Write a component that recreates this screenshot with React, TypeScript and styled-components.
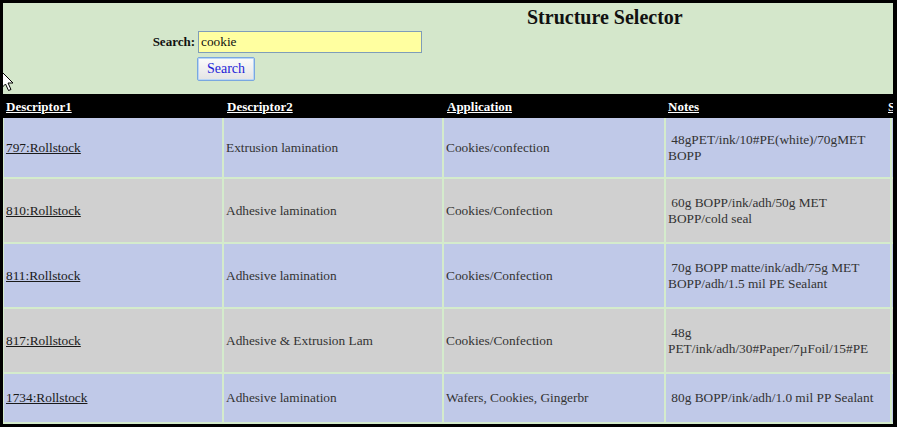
import styled, { createGlobalStyle } from 'styled-components';

const GlobalStyle = createGlobalStyle`
  html, body {
    margin: 0;
    padding: 0;
    background: #000;
  }
  body {
    font-family: "Liberation Serif", "Times New Roman", serif;
  }
`;

interface Structure {
  id: string;
  process: string;
  application: string;
  notes: string;
}

const structures: Structure[] = [
  {
    id: '797:Rollstock',
    process: 'Extrusion lamination',
    application: 'Cookies/confection',
    notes: '48gPET/ink/10#PE(white)/70gMET BOPP',
  },
  {
    id: '810:Rollstock',
    process: 'Adhesive lamination',
    application: 'Cookies/Confection',
    notes: '60g BOPP/ink/adh/50g MET BOPP/cold seal',
  },
  {
    id: '811:Rollstock',
    process: 'Adhesive lamination',
    application: 'Cookies/Confection',
    notes: '70g BOPP matte/ink/adh/75g MET BOPP/adh/1.5 mil PE Sealant',
  },
  {
    id: '817:Rollstock',
    process: 'Adhesive & Extrusion Lam',
    application: 'Cookies/Confection',
    notes: '48g PET/ink/adh/30#Paper/7\u00b5Foil/15#PE',
  },
  {
    id: '1734:Rollstock',
    process: 'Adhesive lamination',
    application: 'Wafers, Cookies, Gingerbr',
    notes: '80g BOPP/ink/adh/1.0 mil PP Sealant',
  },
];

// the last column runs off the right edge of the window
const columns = ['Descriptor1', 'Descriptor2', 'Application', 'Notes', 'S'];

export default function App() {
  return (
    <>
      <GlobalStyle />
      <Frame>
        <SearchPanel>
          <TitleRow>
            <Title>Structure Selector</Title>
          </TitleRow>
          <SearchForm onSubmit={(e) => e.preventDefault()}>
            <SearchLabel htmlFor="q">Search:</SearchLabel>
            <SearchInput id="q" defaultValue="cookie" />
            <SearchButton type="submit">Search</SearchButton>
          </SearchForm>
        </SearchPanel>

        <Results>
          <HeaderRow>
            {columns.map((c) => (
              <HeaderCell key={c}>
                <HeaderLink href="#">{c}</HeaderLink>
              </HeaderCell>
            ))}
          </HeaderRow>
          <Body>
            {structures.map((s, i) => (
              <Row key={s.id} $alt={i % 2 === 1} $first={i === 0}>
                <Cell>
                  <ItemLink href="#">{s.id}</ItemLink>
                </Cell>
                <Cell>{s.process}</Cell>
                <Cell>{s.application}</Cell>
                <Cell>{'\u00a0' + s.notes}</Cell>
                <Cell />
              </Row>
            ))}
          </Body>
        </Results>

        <Pointer width="13" height="21" viewBox="0 0 13 21">
          <path
            d="M0.5 0.5 L0.5 17 L4.5 13 L7.5 19.5 L10 18.5 L7 12 L12 12 Z"
            fill="#fff"
            stroke="#000"
            strokeWidth="1"
          />
        </Pointer>
      </Frame>
    </>
  );
}

const Frame = styled.div`
  position: relative;
  width: 897px;
  height: 427px;
  box-sizing: border-box;
  border-style: solid;
  border-color: #000;
  border-width: 3px 4px 3px 3px;
  background: #d4e7cb;
  overflow: hidden;
`;

const SearchPanel = styled.div`
  height: 91px;
  display: flex;
  flex-direction: column;
`;

const TitleRow = styled.div`
  display: flex;
  padding: 3px 0 0 524px;
  height: 25px;
`;

const Title = styled.h1`
  margin: 0;
  font-size: 20px;
  line-height: 22px;
  font-weight: bold;
  color: #111;
`;

const SearchForm = styled.form`
  display: grid;
  grid-template-columns: 192px 224px;
  column-gap: 3px;
  row-gap: 4px;
  align-items: center;
`;

const SearchLabel = styled.label`
  justify-self: end;
  font-size: 13px;
  font-weight: bold;
  color: #111;
  margin-top: -1px;
`;

const SearchInput = styled.input`
  box-sizing: border-box;
  width: 224px;
  height: 22px;
  margin: 0;
  padding: 0 2px;
  border: 1px solid #7f9db9;
  background: #ffffa0;
  font-family: "Liberation Serif", "Times New Roman", serif;
  font-size: 13.33px;
  color: #111;
  outline: none;
`;

const SearchButton = styled.button`
  grid-column: 2;
  justify-self: start;
  margin-left: -1px;
  box-sizing: border-box;
  width: 58px;
  height: 24px;
  padding: 0;
  border: 1px solid #7aa7e0;
  border-radius: 2px;
  box-shadow: inset 0 0 0 1px #b9d6f6;
  background: linear-gradient(#fbfbfb, #e4e4e4);
  font-family: "Liberation Serif", "Times New Roman", serif;
  font-size: 14px;
  color: #1d1dd8;
`;

const Results = styled.div`
  display: flex;
  flex-direction: column;
`;

const HeaderRow = styled.div`
  display: grid;
  grid-template-columns: 221px 220px 221px 220px 200px;
  height: 24px;
  align-items: center;
  background: #000;
`;

const HeaderCell = styled.div`
  padding: 0 2px 0 3px;
  white-space: nowrap;
`;

const HeaderLink = styled.a`
  font-size: 13px;
  font-weight: bold;
  color: #fff;
  text-decoration: underline;
`;

const Body = styled.div`
  display: flex;
  flex-direction: column;
  gap: 2px;
  padding: 0 0 3px 1px;
  background: #d4ebcc;
`;

const Row = styled.div<{ $alt: boolean; $first: boolean }>`
  display: grid;
  grid-template-columns: 218px 218px 220px 224px 200px;
  column-gap: 2px;
  --pad: ${({ $first }) => ($first ? '14px' : '16px')};

  & > div {
    background: ${({ $alt }) => ($alt ? '#d0d0d0' : '#c0c9e8')};
    padding: var(--pad) 2px;
  }
`;

const Cell = styled.div`
  display: flex;
  align-items: center;
  font-size: 13.33px;
  line-height: 15.5px;
  color: #333;
  overflow-wrap: break-word;
`;

const ItemLink = styled.a`
  color: #1a1a1a;
  text-decoration: underline;
`;

const Pointer = styled.svg`
  position: absolute;
  left: -2px;
  top: 68px;
`;
